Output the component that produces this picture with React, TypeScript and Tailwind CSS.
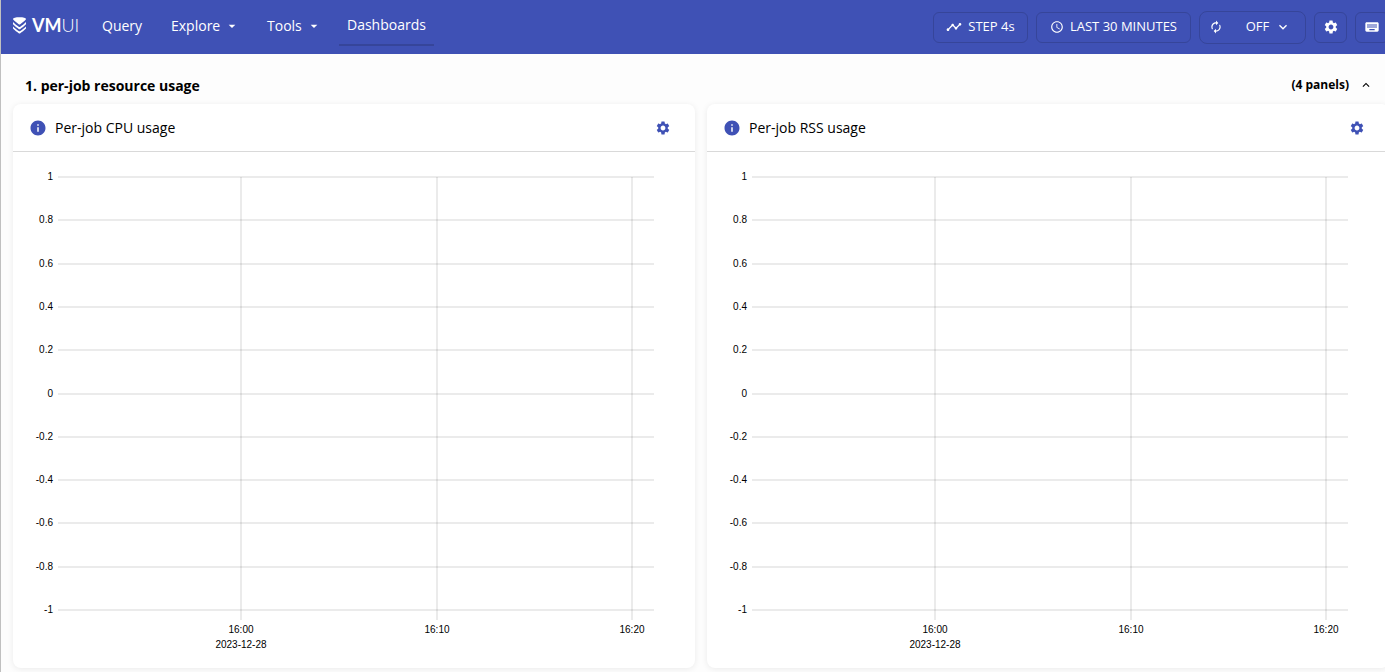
import React from "react";
import {
  MdTimeline, MdAccessTime, MdAutorenew, MdSettings, MdKeyboard, MdInfo,
  MdKeyboardArrowDown, MdKeyboardArrowUp, MdArrowDropDown,
} from "react-icons/md";

const yTicks = ["1", "0.8", "0.6", "0.4", "0.2", "0", "-0.2", "-0.4", "-0.6", "-0.8", "-1"];
const xTicks = [
  { x: 228, label: "16:00", date: "2023-12-28" },
  { x: 424, label: "16:10" },
  { x: 619, label: "16:20" },
];

function Logo() {
  return (
    <a href="#/" className="flex w-[66px] items-center gap-1.5 pb-1">
      <svg viewBox="0 0 13 17" className="h-[17px] w-[13px] shrink-0" fill="#fff" aria-hidden="true">
        <path d="M0 2.2C0 .8 2.800 .2 6.500 .2S13 .8 13 2.200C11.500 4.100 8.500 6.300 7.300 7.200Q6.500 7.700 5.700 7.200C4.500 6.300 1.500 4.100 0 2.200Z" />
        <path d="M0 5V7.200C1.500 8.900 4.500 11 5.700 11.900Q6.500 12.400 7.300 11.900C8.500 11 11.500 8.900 13 7.200V5C11.500 6.700 8.500 8.800 7.300 9.700Q6.500 10.200 5.700 9.700C4.500 8.800 1.500 6.700 0 5Z" />
        <path d="M0 9.400V11.500C1.500 13.200 4.500 15.300 5.700 16.200Q6.500 16.700 7.300 16.200C8.500 15.300 11.500 13.200 13 11.500V9.400C11.500 11 8.500 13.100 7.300 14Q6.500 14.500 5.700 14C4.500 13.100 1.500 11 0 9.400Z" />
      </svg>
      <span className="font-['Lato',sans-serif] text-[18px] leading-6 whitespace-nowrap">
        <b className="font-bold">VM</b><span className="font-light">UI</span>
      </span>
    </a>
  );
}

function HeaderButton({ children, label, className = "" }: { children: React.ReactNode; label?: string; className?: string }) {
  return (
    <button type="button" aria-label={label} className={`flex h-[31px] shrink-0 items-center justify-center rounded-md border border-[#36459a] text-[13px] whitespace-nowrap ${className}`}>
      {children}
    </button>
  );
}

function Panel({ title }: { title: string }) {
  return (
    <section className="min-w-0 rounded-lg bg-white shadow-[0_1px_6px_rgba(0,0,0,0.08)]">
      <header className="flex h-12 items-center border-b border-[#d9d9d9] pr-6 pl-4">
        <MdInfo className="size-[18px] text-[#3f51b5]" />
        <h2 className="ml-2 flex-1 text-[14px] leading-5">{title}</h2>
        <button type="button" aria-label={`${title} settings`} className="text-[#3f51b5]">
          <MdSettings className="size-4" />
        </button>
      </header>
      <svg viewBox="0 0 682 516" className="block w-full" role="img" aria-label={title}>
        <g fill="none" stroke="#000" strokeOpacity="0.08" strokeWidth="2">
          {yTicks.map((t, i) => {
            const y = 25 + Math.round(i * 43.3);
            return <path key={t} d={`M45 ${y}H641`} />;
          })}
          {xTicks.map((t) => <path key={t.x} d={`M${t.x} 25V468`} />)}
        </g>
        <g fill="#000" fontSize="10" fontFamily="'Liberation Sans', Arial, sans-serif">
          {yTicks.map((t, i) => (
            <text key={t} x="40" y={28 + Math.round(i * 43.3)} textAnchor="end">{t}</text>
          ))}
          {xTicks.map((t) => (
            <React.Fragment key={t.x}>
              <text x={t.x} y="481" textAnchor="middle">{t.label}</text>
              {t.date && <text x={t.x} y="496" textAnchor="middle">{t.date}</text>}
            </React.Fragment>
          ))}
        </g>
      </svg>
    </section>
  );
}

export default function App() {
  return (
    <div className="overflow-x-hidden border-l border-[#c0c0c0] bg-[#fdfdfd] pb-1 font-['Open_Sans','Noto_Sans',sans-serif] text-black">
      <header className="flex h-[54px] items-center bg-[#3f51b5] pl-3 text-white">
        <Logo />
        <nav className="ml-[23px] flex flex-1 items-center text-[14px] leading-5">
          <a href="#/query" className="w-[69px] pb-0.5">Query</a>
          <button type="button" className="flex w-24 items-center gap-1 pb-0.5">Explore<MdArrowDropDown className="size-4" /></button>
          <button type="button" className="flex w-[72px] items-center gap-1 pb-0.5">Tools<MdArrowDropDown className="size-4" /></button>
          <a href="#/dashboards" className="flex h-[38px] items-center border-b-2 border-[#36459a] px-2 pb-0.5">Dashboards</a>
        </nav>
        <div className="-mr-1 flex items-center gap-2">
          <HeaderButton className="w-[95px] gap-1.5"><MdTimeline className="size-4" />STEP 4s</HeaderButton>
          <HeaderButton className="w-[155px] gap-1.5"><MdAccessTime className="size-[14px]" />LAST 30 MINUTES</HeaderButton>
          <div className="flex h-[33px] w-[107px] items-center rounded-lg border border-[#36459a] text-[13px]">
            <button type="button" aria-label="Refresh" className="flex w-8 justify-center"><MdAutorenew className="size-[14px]" /></button>
            <button type="button" className="flex flex-1 items-center justify-center gap-1.5">OFF<MdKeyboardArrowDown className="size-4" /></button>
          </div>
          <HeaderButton label="Settings" className="w-[33px]"><MdSettings className="size-4" /></HeaderButton>
          <HeaderButton label="Keyboard shortcuts" className="w-[34px]"><MdKeyboard className="size-4" /></HeaderButton>
        </div>
      </header>
      <main className="-mr-1 pl-3">
        <button type="button" className="flex h-[50px] w-full items-center pt-3 pr-4 pl-3 text-left font-bold">
          <span className="flex-1 text-[14px]">1. per-job resource usage</span>
          <span className="text-[12px]">(4 panels)</span>
          <MdKeyboardArrowUp className="ml-2.5 size-[14px]" />
        </button>
        <div className="grid grid-cols-2 gap-3">
          <Panel title="Per-job CPU usage" />
          <Panel title="Per-job RSS usage" />
        </div>
      </main>
    </div>
  );
}
